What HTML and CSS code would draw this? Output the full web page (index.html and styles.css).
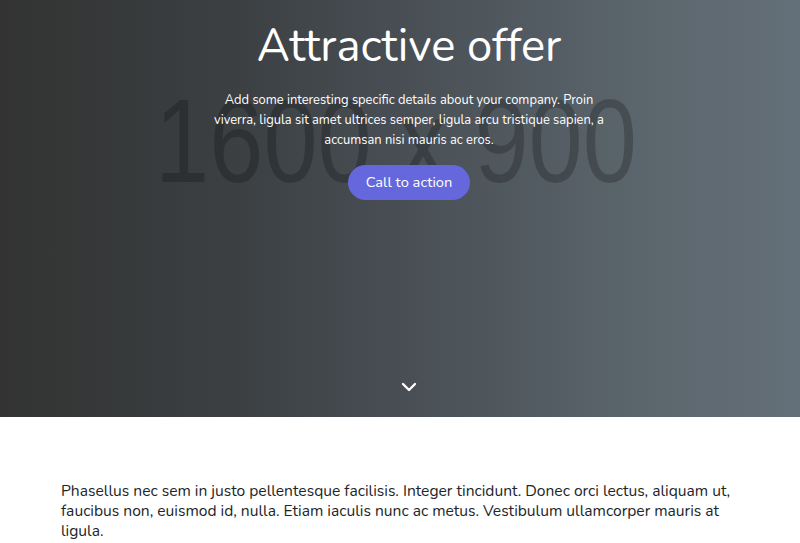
FILE: index.html
```html
<!DOCTYPE html>
<html lang="en">
<head>
<meta charset="utf-8">
<title>Attractive offer</title>
<link rel="stylesheet" href="styles.css">
</head>
<body>
<header class="hero">
  <div class="placeholder" aria-hidden="true">1600 x 900</div>
  <div class="hero-content">
    <h1 class="hero-title">Attractive offer</h1>
    <p class="hero-text">Add some interesting specific details about your company. Proin viverra, ligula sit amet ultrices semper, ligula arcu tristique sapien, a accumsan nisi mauris ac eros.</p>
    <a class="cta" href="#">Call to action</a>
  </div>
  <a class="scroll-down" href="#main" aria-label="Scroll down">
    <svg width="16" height="10" viewBox="0 0 16 10"><path d="M2 2l6 6 6-6" fill="none" stroke="#fff" stroke-width="2.4" stroke-linecap="round" stroke-linejoin="round"/></svg>
  </a>
</header>
<main id="main" class="content">
  <p class="lead">Phasellus nec sem in justo pellentesque facilisis. Integer tincidunt. Donec orci lectus, aliquam ut, faucibus non, euismod id, nulla. Etiam iaculis nunc ac metus. Vestibulum ullamcorper mauris at ligula.</p>
</main>
</body>
</html>
```
FILE: styles.css
```css
html, body {
  margin: 0;
  padding: 0;
}
body {
  font-family: "Nunito", "Lato", "Open Sans", sans-serif;
  color: #212529;
  background: #fff;
}
.hero {
  position: relative;
  height: 417px;
  padding-left: 18px;
  box-sizing: border-box;
  background: linear-gradient(to right, #323332 0%, #3c4043 30%, #4b5258 55%, #5a646b 78%, #647079 100%);
  display: flex;
  flex-direction: column;
  align-items: center;
  overflow: hidden;
}
.placeholder {
  position: absolute;
  left: 0;
  right: 0;
  top: 71px;
  text-align: center;
  font-family: "Liberation Sans", Arial, sans-serif;
  font-size: 118px;
  line-height: 140px;
  color: rgba(0, 0, 0, 0.22);
  transform: translateX(-4px) scaleX(0.825);
  white-space: nowrap;
}
.hero-content {
  position: relative;
  display: flex;
  flex-direction: column;
  align-items: center;
  text-align: center;
  padding-top: 17px;
}
.hero-title {
  margin: 0;
  font-weight: 400;
  font-size: 45.4px;
  line-height: 58px;
  color: #fff;
}
.hero-text {
  margin: 15px 0 0;
  width: 396px;
  font-size: 12.9px;
  line-height: 20px;
  color: #fff;
}
.cta {
  margin-top: 15px;
  display: inline-block;
  background: #6468dc;
  color: #fff;
  text-decoration: none;
  font-size: 14.7px;
  line-height: 35px;
  height: 35px;
  padding: 0 18px;
  border-radius: 18px;
}
.scroll-down {
  position: absolute;
  left: 401px;
  top: 382px;
  display: block;
  width: 16px;
  height: 10px;
}
.scroll-down svg {
  display: block;
}
.content {
  padding: 64px 61px 0;
}
.lead {
  margin: 0;
  max-width: 680px;
  font-size: 15.6px;
  line-height: 20px;
}
```
